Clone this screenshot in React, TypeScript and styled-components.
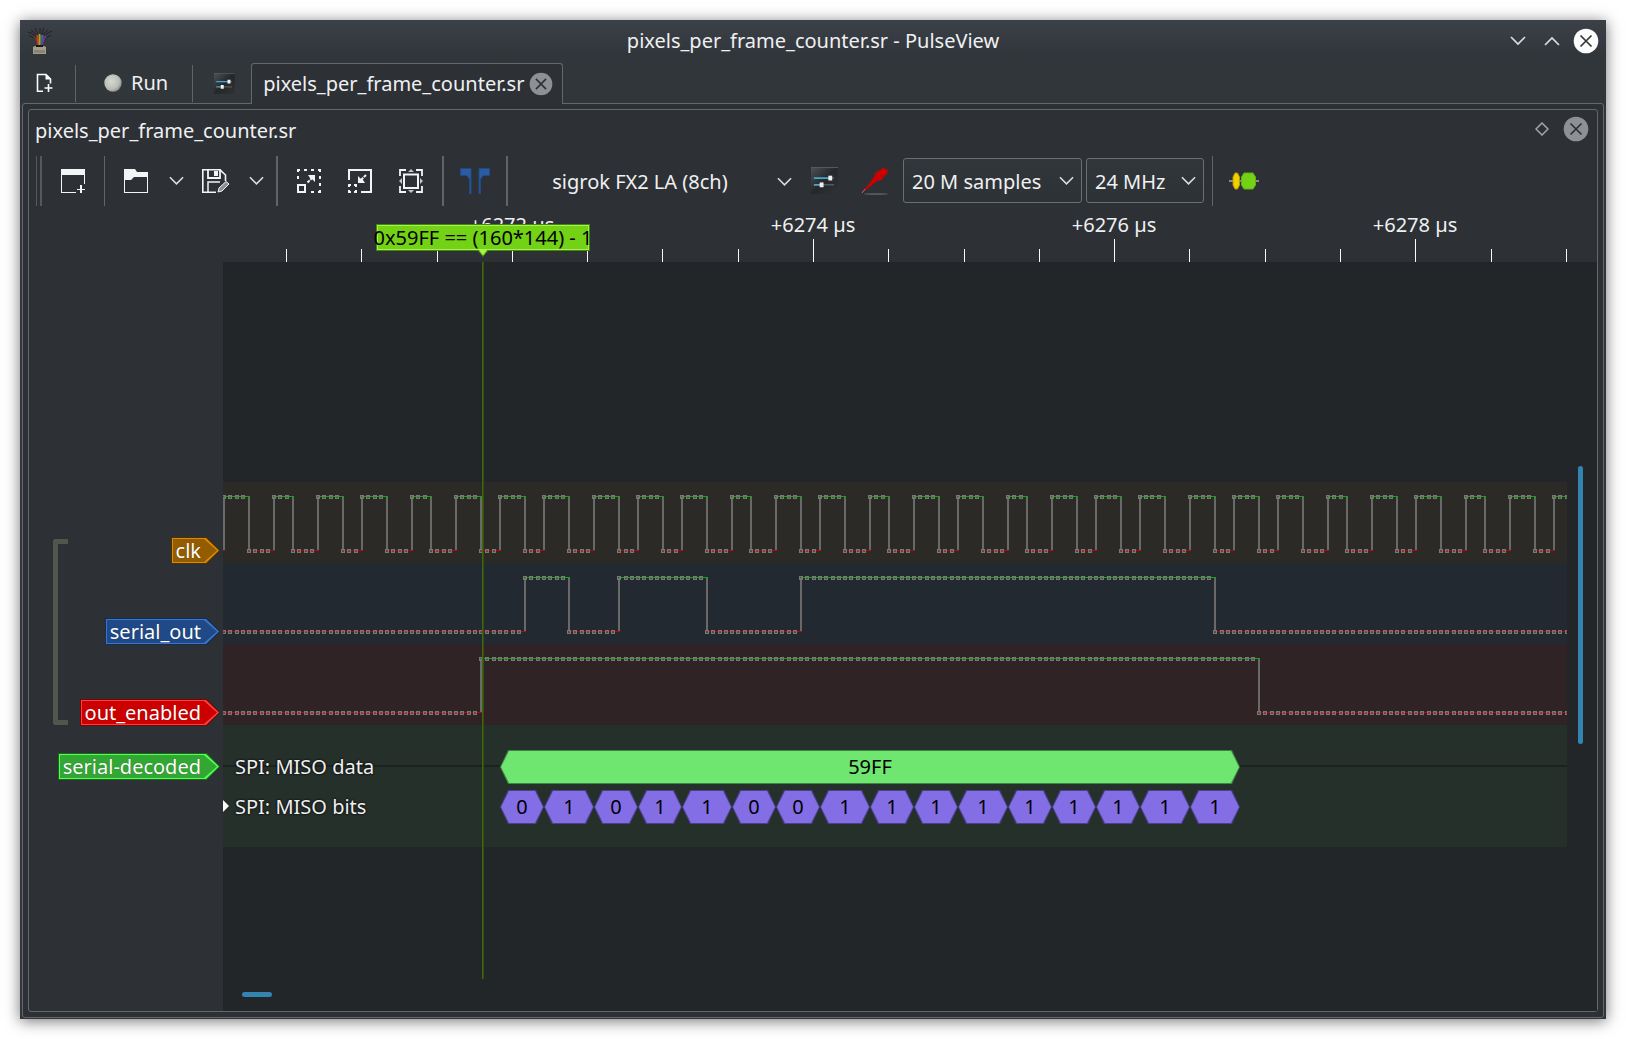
import React, { useLayoutEffect, useRef, useState } from 'react';
import styled, { createGlobalStyle } from 'styled-components';

const GlobalStyle = createGlobalStyle`
  *, *::before, *::after { box-sizing: border-box; }
  body {
    margin: 0;
    background: #fff;
    color: #eff0f1;
    font-family: "Noto Sans", "Open Sans", sans-serif;
    font-size: 20px;
    line-height: 28px;
  }
  button, select { font: inherit; color: inherit; }
`;

/* ---------- time axis ---------- */

const SAMPLE_PITCH = 6.2736;
const SAMPLE_COUNT = 480;
const GUTTER = 194;
const SCROLL_COLUMN = 30;

const sampleX = (sample: number) => Math.round(1 + sample * SAMPLE_PITCH);

/* ---------- window frame ---------- */

const Window = styled.main`
  display: flex;
  flex-direction: column;
  min-height: calc(100vh - 40px);
  margin: 20px;
  background: #31363b;
  box-shadow: 0 2px 14px rgba(0, 0, 0, 0.55);
`;

const TitleBar = styled.header`
  display: grid;
  grid-template-columns: 1fr auto 1fr;
  align-items: center;
  height: 43px;
  padding: 0 7px 2px;
  background: linear-gradient(#3c4149, #31363b 80%);
`;

const WindowTitle = styled.h1`
  margin: 0;
  font-size: 20px;
  font-weight: 400;
`;

const WindowButtons = styled.div`
  display: flex;
  justify-content: flex-end;
  gap: 8px;
`;

const PlainButton = styled.button<{ $width: number; $height?: number }>`
  display: flex;
  align-items: center;
  justify-content: center;
  width: ${p => p.$width}px;
  height: ${p => p.$height ?? p.$width}px;
  padding: 0;
  border: 0;
  background: none;
`;

const TopBar = styled.div`
  display: flex;
  align-items: flex-end;
  gap: 10px;
  height: 40px;
`;

const MainTools = styled.div`
  display: flex;
  align-items: center;
  gap: 14px;
  height: 40px;
  padding-left: 7px;
`;

const Divider = styled.span<{ $height: number; $width?: number }>`
  flex: none;
  width: ${p => p.$width ?? 1}px;
  height: ${p => p.$height}px;
  background: #616468;
`;

const RunButton = styled.button`
  display: flex;
  align-items: center;
  gap: 9px;
  height: 38px;
  padding: 0 10px 0 14px;
  border: 0;
  background: none;
`;

const Tab = styled.div`
  position: relative;
  z-index: 1;
  display: flex;
  align-items: center;
  gap: 5px;
  height: 41px;
  margin-bottom: -1px;
  padding: 0 9px 0 11px;
  border: 1px solid #64676b;
  border-bottom: 0;
  border-radius: 3px 3px 0 0;
  background: #2d3035;
`;

const OuterFrame = styled.div`
  display: flex;
  flex: 1;
  margin: 0 2px 1px;
  padding: 5px;
  border: 1px solid #64676b;
  border-radius: 3px;
  background: #2d3035;
`;

const Dock = styled.section`
  display: flex;
  flex: 1;
  flex-direction: column;
  min-width: 0;
  border: 1px solid #64676b;
  border-radius: 3px;
`;

const DockTitle = styled.div`
  display: flex;
  align-items: center;
  height: 45px;
  padding: 0 8px 4px 6px;
`;

const DockName = styled.h2`
  flex: 1;
  margin: 0;
  font-size: 20px;
  font-weight: 400;
`;

const DockButtons = styled.div`
  display: flex;
  gap: 8px;
  padding-bottom: 4px;
`;

/* ---------- session toolbar ---------- */

const Toolbar = styled.div`
  display: flex;
  align-items: center;
  gap: 8px;
  height: 51px;
  padding-left: 7px;
`;

const ToolGroup = styled.div<{ $gap: number }>`
  display: flex;
  flex: none;
  align-items: center;
  gap: ${p => p.$gap}px;
`;

const Grip = styled.span`
  width: 6px;
  height: 50px;
  border: solid #55585d;
  border-width: 0 2px 0 1px;
`;

const DeviceButton = styled.button`
  display: flex;
  align-items: center;
  gap: 16px;
  width: 277px;
  height: 40px;
  padding: 2px 4px 0 0;
  border: 0;
  background: none;
`;

const DeviceName = styled.span`
  flex: 1;
  text-align: center;
`;

const SelectBox = styled.label<{ $width: number }>`
  display: grid;
  align-items: center;
  width: ${p => p.$width}px;
  height: 45px;

  > * { grid-area: 1 / 1; }
  > svg {
    justify-self: end;
    margin-right: 8px;
    pointer-events: none;
  }
`;

const Select = styled.select`
  width: 100%;
  height: 100%;
  padding: 2px 28px 0 8px;
  border: 1px solid #6b6e72;
  border-radius: 3px;
  background: linear-gradient(#31363a, #2d3236);
  appearance: none;
`;

/* ---------- time ruler ---------- */

const RulerBar = styled.div`
  height: 56px;
  padding: 0 ${SCROLL_COLUMN}px 0 ${GUTTER}px;
`;

const Scale = styled.div`
  position: relative;
  height: 100%;
  overflow: hidden;
`;

const Ticks = styled.svg`
  display: block;
  width: 100%;
  height: 56px;
`;

const TickLabel = styled.span`
  position: absolute;
  top: 5px;
  width: 100px;
  margin-left: -50px;
  text-align: center;
`;

const Flag = styled.div`
  position: absolute;
  top: 18px;
  left: 153px;
  display: flex;
  justify-content: center;
  width: 214px;
  height: 27px;
  border: 1px solid #47850c;
  background: #73d216;
  box-shadow: inset 0 0 0 1px #a0f64c;
  color: #000;
  line-height: 25px;
  white-space: nowrap;
`;

const FlagTip = styled.svg`
  position: absolute;
  top: 24px;
  left: 100px;
`;

/* ---------- signal view ---------- */

const Body = styled.div`
  display: flex;
  flex: 1;
`;

const Gutter = styled.div`
  display: flex;
  flex-direction: column;
  flex: none;
  gap: 27px;
  width: ${GUTTER}px;
  padding: 275px 3px 0 24px;
`;

const SignalGroup = styled.div`
  display: flex;
  align-items: center;
  justify-content: space-between;
`;

const Bracket = styled.span`
  width: 15px;
  height: 186px;
  border: 5px solid #53554f;
  border-right: 0;
  border-radius: 3px 0 0 3px;
  box-shadow: 0 0 1px 1px #2f312f;
`;

const LabelColumn = styled.div`
  display: flex;
  flex-direction: column;
  align-items: flex-end;
  gap: 54px;
`;

const ARROW = 'polygon(0 0, calc(100% - 13px) 0, 100% 50%, calc(100% - 13px) 100%, 0 100%)';

const SignalLabel = styled.div<{ $fill: string; $light: string; $dark: string }>`
  position: relative;
  z-index: 0;
  align-self: flex-end;
  height: 27px;
  padding: 0 19px 0 5px;
  background: ${p => p.$dark};
  clip-path: ${ARROW};
  color: #fff;
  line-height: 27px;
  text-shadow: 0 0 1px rgba(0, 0, 0, 0.4);

  &::before, &::after {
    content: "";
    position: absolute;
    z-index: -1;
    clip-path: ${ARROW};
  }
  &::before { inset: 1px; background: ${p => p.$light}; }
  &::after { inset: 2px 3px 2px 2px; background: ${p => p.$fill}; }
`;

const View = styled.div`
  display: grid;
  flex: 1;
  grid-template: 1fr 32px / minmax(0, 1fr) ${SCROLL_COLUMN}px;
  min-width: 0;
  background: #232629;
`;

const Traces = styled.div`
  position: relative;
  padding-top: 220px;
  overflow: hidden;
`;

const TraceRow = styled.div<{ $tint: string }>`
  height: 81px;
  background: ${p => p.$tint};
`;

const Wave = styled.svg`
  display: block;
  width: 100%;
  height: 81px;
`;

const DecoderRow = styled.div`
  display: flex;
  flex-direction: column;
  gap: 6px;
  height: 122px;
  padding-top: 25px;
  background: #25302b;
`;

const AnnotationRow = styled.div<{ $line?: boolean }>`
  position: relative;
  height: 34px;
  padding-left: 12px;
  background: ${p => (p.$line ? 'linear-gradient(#1c221f, #1c221f) 0 15px / 100% 2px no-repeat' : 'none')};
  line-height: 34px;
`;

const RowTitle = styled.span`
  text-shadow: 0 0 2px #111, 0 0 2px #111, 0 0 1px #111;
`;

const Expander = styled.svg`
  position: absolute;
  top: 10px;
  left: 0;
`;

const HEXAGON = 'polygon(8px 0, calc(100% - 8px) 0, 100% 50%, calc(100% - 8px) 100%, 8px 100%, 0 50%)';

const Hex = styled.span<{ $fill: string; $edge: string }>`
  position: absolute;
  z-index: 0;
  top: 0;
  height: 34px;
  background: ${p => p.$edge};
  clip-path: ${HEXAGON};
  color: #000;
  line-height: 33px;
  text-align: center;

  &::before {
    content: "";
    position: absolute;
    z-index: -1;
    inset: 1px;
    background: ${p => p.$fill};
    clip-path: ${HEXAGON};
  }
`;

const CursorLine = styled.span`
  position: absolute;
  top: 0;
  bottom: 0;
  left: 259px;
  width: 2px;
  background: linear-gradient(90deg, #3c670c 50%, #33500f 50%);
`;

const VerticalThumb = styled.span`
  width: 5px;
  height: 278px;
  margin: 204px 0 0 11px;
  border-radius: 3px;
  background: #3384b1;
`;

const HorizontalThumb = styled.span`
  width: 30px;
  height: 5px;
  margin: 13px 0 0 19px;
  border-radius: 3px;
  background: #3384b1;
`;

/* ---------- icons ---------- */

const Chevron = ({ up = false, width = 16 }: { up?: boolean; width?: number }) => (
  <svg width={width} height="10" viewBox="0 0 16 10" fill="none" stroke="#dcdddf" strokeWidth="1.7">
    <path d={up ? 'M1 9 8 2 15 9' : 'M1 1 8 8 15 1'} />
  </svg>
);

const RoundClose = ({ disc, cross }: { disc: string; cross: string }) => (
  <svg width="26" height="26" viewBox="0 0 26 26">
    <circle cx="13" cy="13" r="12.3" fill={disc} />
    <path d="M7.5 7.5 18.5 18.5M18.5 7.5 7.5 18.5" stroke={cross} strokeWidth="1.7" />
  </svg>
);

const AppIcon = () => (
  <svg width="26" height="28" viewBox="0 0 26 28" fill="none">
    <path d="M10 11C7 7 4 6 1 5M10 10C8 6 6 4 4 3M11 9C10 5 9 3 8 1M13 9V1M15 9C15 5 16 3 17 1M15 10C17 6 19 4 21 3M16 11C18 7 21 6 25 4M9 13C6 10 4 9 2 9M17 13C20 10 22 9 24 8" stroke="#202124" strokeWidth="1" />
    <path d="M11 19C10 14 9 12 7 9" stroke="#6d3428" strokeWidth="1.8" />
    <path d="M11.500 19 10 8" stroke="#b8432c" strokeWidth="1.8" />
    <path d="M12.500 19V7" stroke="#c8941f" strokeWidth="1.8" />
    <path d="M13.500 19 14 8" stroke="#4f8f3d" strokeWidth="1.4" />
    <path d="M14.200 19 16 8" stroke="#3f5fae" strokeWidth="1.8" />
    <path d="M15 19C15.500 14 17 11 19 9" stroke="#6d3a8c" strokeWidth="1.800" />
    <path d="M6 20 8 19H17L19 20V27H6Z" fill="#a39d8b" />
    <path d="M9 18H16V20H9Z" fill="#191815" />
    <path d="M7 23H18V26H7Z" fill="#8a8473" />
  </svg>
);

const NewDocIcon = () => (
  <svg width="17" height="20" viewBox="0 0 17 20" fill="none" stroke="#fcfcfc">
    <path d="M7 18.3H1.500V1.500H10L14.500 6V10.500" strokeWidth="1.6" />
    <path d="M9.500 1V6.500H15Z" fill="#fcfcfc" stroke="none" />
    <path d="M12.500 11V19M8.500 15H16.500" strokeWidth="1.6" />
  </svg>
);

const RunLamp = () => (
  <svg width="18" height="18" viewBox="0 0 18 18">
    <defs>
      <radialGradient id="lamp" cx="0.4" cy="0.4" r="0.65">
        <stop offset="0" stopColor="#d6d8d1" />
        <stop offset="0.7" stopColor="#babdb6" />
        <stop offset="1" stopColor="#83867f" />
      </radialGradient>
    </defs>
    <circle cx="9" cy="9" r="8.7" fill="url(#lamp)" />
  </svg>
);

const SlidersIcon = ({ size }: { size: number }) => (
  <svg width={size} height={size} viewBox="0 0 28 28">
    <defs>
      <linearGradient id="panel" x1="0" y1="0" x2="1" y2="1">
        <stop offset="0" stopColor="#505356" />
        <stop offset="0.5" stopColor="#25282a" />
        <stop offset="1" stopColor="#303336" />
      </linearGradient>
    </defs>
    <rect width="28" height="28" fill="url(#panel)" />
    <path d="M0 .5H28" stroke="#5a5d60" />
    <path d="M3 11.500H19M3 18.500H11" stroke="#4aa3d0" strokeWidth="1.8" />
    <path d="M12 18.500H24M20 11.500H24" stroke="#55585b" strokeWidth="1.5" />
    <rect x="18" y="9" width="4" height="5" fill="#eee" />
    <rect x="9" y="16" width="4" height="5" fill="#eee" />
  </svg>
);

const NewViewIcon = () => (
  <svg width="24" height="24" viewBox="0 0 24 24" fill="#f3f4f5" shapeRendering="crispEdges">
    <path d="M0 0H24V15H23V6H1V23H15V24H0Z" />
    <path d="M19 16H21V20H24V21H21V24H19V21H16V20H19Z" />
  </svg>
);

const FolderIcon = () => (
  <svg width="24" height="24" viewBox="0 0 24 24" fill="#f3f4f5">
    <path d="M0 0H11L13 3H24V24H0ZM1 11V23H23V8H10L7 11Z" fillRule="evenodd" />
  </svg>
);

const SaveIcon = () => (
  <svg width="28" height="24" viewBox="0 0 28 24" fill="none" stroke="#f3f4f5">
    <path d="M14 23.2H.8V.8H18L23.500 6V12" strokeWidth="1.6" />
    <path d="M6 .5V9H18V.5" strokeWidth="1.8" />
    <path d="M12 2V7H16V2Z" fill="#f3f4f5" stroke="none" />
    <path d="M6 23V13H18" strokeWidth="1.5" />
    <path d="M16 23 17 19 24 12.500 27 15 20 22Z" fill="#8d9093" strokeWidth="1" />
  </svg>
);

const ZoomInIcon = () => (
  <svg width="24" height="24" viewBox="0 0 24 24" fill="none" stroke="#f3f4f5">
    <path d="M0 1H3M7 1H10M14 1H17M21 1H24M23 1V3M23 7V10M23 14V17M23 21V24M21 23H24M1 1V3M1 7V10M14 23H17" strokeWidth="2" />
    <path d="M1 16H8V23H1Z" strokeWidth="2" />
    <path d="M10.500 13.500 16 8" strokeWidth="2" strokeDasharray="3 1" />
    <path d="M11 6H18V13L15.500 10.500 13 9Z" fill="#f3f4f5" stroke="none" />
  </svg>
);

const ZoomOutIcon = () => (
  <svg width="24" height="24" viewBox="0 0 24 24" fill="none" stroke="#f3f4f5">
    <path d="M1 11V1H23V23H13" strokeWidth="2" />
    <path d="M0 16H3M6 16H9M8 16V18M8 21V24M0 23H3M6 23H8M1 16V18M1 21V24" strokeWidth="2" />
    <path d="M18 6 12.500 11.500" strokeWidth="2" strokeDasharray="3 1" />
    <path d="M10 7 12.500 9.500 15 11 17 14H10Z" fill="#f3f4f5" stroke="none" />
  </svg>
);

const ZoomFitIcon = () => (
  <svg width="24" height="24" viewBox="0 0 24 24" fill="none" stroke="#f3f4f5">
    <path d="M1 7V1H7M17 1H23V7M23 17V23H17M7 23H1V17" strokeWidth="1.8" />
    <path d="M5 5.500H19V19H5Z" strokeWidth="2" />
    <path d="M9 3 12 0 15 3ZM9 21 12 24 15 21ZM3 9 0 12 3 15ZM21 9 24 12 21 15Z" fill="#c5c7c9" stroke="none" />
  </svg>
);

const CursorsIcon = () => (
  <svg width="30" height="26" viewBox="0 0 30 26" stroke="#204a87" strokeWidth="1">
    <path d="M.5.5H11V26H9.500V11L6.500 7.500H.5Z" fill="#2c5c9f" />
    <path d="M29.500.5H19V26H20.500V11L23.500 7.500H29.500Z" fill="#2c5c9f" />
  </svg>
);

const ProbeIcon = () => (
  <svg width="28" height="28" viewBox="0 0 28 28">
    <ellipse cx="15" cy="27" rx="12" ry="1" fill="#54585b" />
    <path d="M1 26 13 10 15 5 20 3 22 0 24 2 27 3 26 7 23 9 21 13 16 14Z" fill="#cc0000" />
    <path d="M1 26 4 22" stroke="#e05a5a" strokeWidth="1" />
  </svg>
);

const DecoderIcon = () => (
  <svg width="30" height="18" viewBox="0 0 30 18">
    <path d="M0 9H30" stroke="#888a85" strokeWidth="2" />
    <path d="M6 1H8.500L10.500 5V13L8.500 17H6L4 13V5Z" fill="#f0d000" stroke="#b99a00" />
    <path d="M15 1H24L26.500 5V13L24 17H15L12.500 13V5Z" fill="#73d216" stroke="#5fb010" />
  </svg>
);

const DiamondIcon = () => (
  <svg width="14" height="14" viewBox="0 0 14 14" fill="none" stroke="#a3a5a7" strokeWidth="1.5">
    <path d="M7 1 13 7 7 13 1 7Z" />
  </svg>
);

/* ---------- data ---------- */

const clkEdges = [
  0, 4, 8, 11, 15, 19, 22, 26, 30, 33, 37, 41, 44, 48, 51, 55, 59, 63, 66, 70, 73, 77, 81, 84,
  88, 92, 95, 99, 103, 106, 110, 114, 117, 121, 125, 128, 132, 136, 139, 143, 146, 150, 154, 158,
  161, 165, 168, 172, 176, 179, 183, 187, 190, 194, 198, 201, 205, 209, 212,
];
const clkRuns = [4, 4, 3, 4, 4, 3];
for (let i = 0; clkEdges[clkEdges.length - 1] < SAMPLE_COUNT - 4; i++) {
  clkEdges.push(clkEdges[clkEdges.length - 1] + clkRuns[i % clkRuns.length]);
}

const channels = [
  { name: 'clk', tint: '#2c2a27', fill: '#935c00', light: '#d98a08', dark: '#4d3102', edges: clkEdges },
  { name: 'serial_out', tint: '#222931', fill: '#204a87', light: '#3a76cf', dark: '#152c50', edges: [48, 55, 63, 77, 92, 158] },
  { name: 'out_enabled', tint: '#2f2326', fill: '#cc0000', light: '#ff4040', dark: '#700606', edges: [41, 165] },
];

const bitStarts = [44, 51, 59, 66, 73, 81, 88, 95, 103, 110, 117, 125, 132, 139, 146, 154, 162];
const bits = '0101100111111111'.split('');

const ticks = Array.from({ length: 40 }, (_, i) => ({
  x: Math.floor(63.5 + i * 12 * SAMPLE_PITCH),
  major: i % 4 === 3,
  time: 6272 + (i - 3) / 2,
}));

/* ---------- parts ---------- */

const HIGH = 14;
const LOW = 68;

function Waveform({ edges, name }: { edges: number[]; name: string }) {
  let high = '';
  let low = '';
  let steps = '';
  let marks = '';
  let holes = '';
  let level = false;
  let from = 0;
  [...edges, SAMPLE_COUNT].forEach((edge, i) => {
    const x = sampleX(edge);
    const run = `M${from} ${level ? HIGH : LOW}H${x + 1}v1H${from}Z`;
    if (level) high += run;
    else low += run;
    if (i < edges.length) steps += `M${x - 1} ${HIGH + 1}h2V${LOW}h-2Z`;
    from = x;
    level = !level;
  });
  let next = 0;
  level = false;
  for (let s = 0; s < SAMPLE_COUNT; s++) {
    while (next < edges.length && edges[next] <= s) {
      level = !level;
      next++;
    }
    const x = sampleX(s) - 2;
    const y = (level ? HIGH : LOW) - 1;
    marks += `M${x} ${y}h4v4h-4ZM${x + 1} ${y + 1}v2h2v-2Z`;
    holes += `M${x + 1} ${y + 1}h2v2h-2Z`;
  }
  return (
    <Wave role="img" aria-label={name} shapeRendering="crispEdges">
      <path d={low} fill="#c80000" />
      <path d={high} fill="#00b400" />
      <path d={steps} fill="#696968" />
      <path d={marks} fill="#787876" fillRule="evenodd" />
      <path d={holes} fill="#787876" fillOpacity="0.45" />
    </Wave>
  );
}

function Ruler() {
  const scale = useRef<HTMLDivElement>(null);
  const [width, setWidth] = useState(0);

  useLayoutEffect(() => {
    const element = scale.current!;
    const measure = () => setWidth(element.clientWidth);
    measure();
    const observer = new ResizeObserver(measure);
    observer.observe(element);
    return () => observer.disconnect();
  }, []);

  return (
    <RulerBar>
      <Scale ref={scale}>
        <Ticks fill="#fcfcfc" shapeRendering="crispEdges">
          {ticks.filter(t => t.x < width).map(t => (
            <rect key={t.x} x={t.x} y={t.major ? 33 : 43} width="1" height={t.major ? 23 : 13} />
          ))}
        </Ticks>
        {ticks.filter(t => t.major && t.x + 50 < width).map(t => (
          <TickLabel key={t.x} style={{ left: t.x }}>+{t.time} µs</TickLabel>
        ))}
        <Flag>
          0x59FF == (160*144) - 1
          <FlagTip width="12" height="8" viewBox="0 0 12 8">
            <path d="M0 1H12L6 8Z" fill="#47850c" />
            <path d="M1 0H11L6 6.5Z" fill="#a0f64c" />
          </FlagTip>
        </Flag>
      </Scale>
    </RulerBar>
  );
}

function Annotation({ from, to, text, fill, edge }: { from: number; to: number; text: string; fill: string; edge: string }) {
  const left = sampleX(from);
  return (
    <Hex $fill={fill} $edge={edge} style={{ left, width: sampleX(to) - left }}>
      {text}
    </Hex>
  );
}

export default function App() {
  return (
    <>
      <GlobalStyle />
      <Window>
        <TitleBar>
          <AppIcon />
          <WindowTitle>pixels_per_frame_counter.sr - PulseView</WindowTitle>
          <WindowButtons>
            <PlainButton $width={26} aria-label="Minimize"><Chevron /></PlainButton>
            <PlainButton $width={26} aria-label="Maximize"><Chevron up /></PlainButton>
            <PlainButton $width={26} aria-label="Close window"><RoundClose disc="#fcfcfc" cross="#31363b" /></PlainButton>
          </WindowButtons>
        </TitleBar>

        <TopBar>
          <MainTools>
            <PlainButton $width={34} aria-label="New session"><NewDocIcon /></PlainButton>
            <Divider $height={37} />
            <RunButton><RunLamp />Run</RunButton>
            <Divider $height={37} />
            <PlainButton $width={34} aria-label="Settings"><SlidersIcon size={21} /></PlainButton>
          </MainTools>
          <Tab>
            pixels_per_frame_counter.sr
            <PlainButton $width={24} aria-label="Close tab"><RoundClose disc="#8e9194" cross="#2d3035" /></PlainButton>
          </Tab>
        </TopBar>

        <OuterFrame>
          <Dock>
            <DockTitle>
              <DockName>pixels_per_frame_counter.sr</DockName>
              <DockButtons>
                <PlainButton $width={26} aria-label="Float"><DiamondIcon /></PlainButton>
                <PlainButton $width={26} aria-label="Close view"><RoundClose disc="#8e9194" cross="#2d3035" /></PlainButton>
              </DockButtons>
            </DockTitle>

            <Toolbar>
              <ToolGroup $gap={11}>
                <Grip />
                <PlainButton $width={40} aria-label="New view"><NewViewIcon /></PlainButton>
                <Divider $height={50} />
                <PlainButton $width={40} aria-label="Open"><FolderIcon /></PlainButton>
                <PlainButton $width={18} $height={40} aria-label="Open options"><Chevron width={15} /></PlainButton>
                <PlainButton $width={40} aria-label="Save"><SaveIcon /></PlainButton>
                <PlainButton $width={18} $height={40} aria-label="Save options"><Chevron width={15} /></PlainButton>
                <Divider $height={50} $width={2} />
                <PlainButton $width={40} aria-label="Zoom in"><ZoomInIcon /></PlainButton>
                <PlainButton $width={40} aria-label="Zoom out"><ZoomOutIcon /></PlainButton>
                <PlainButton $width={40} aria-label="Zoom to fit"><ZoomFitIcon /></PlainButton>
                <Divider $height={50} $width={2} />
                <PlainButton $width={40} aria-label="Show cursors"><CursorsIcon /></PlainButton>
                <Divider $height={50} $width={2} />
                <DeviceButton>
                  <DeviceName>sigrok FX2 LA (8ch)</DeviceName>
                  <Chevron width={15} />
                </DeviceButton>
              </ToolGroup>
              <ToolGroup $gap={11}>
                <PlainButton $width={40} aria-label="Configure device"><SlidersIcon size={27} /></PlainButton>
                <PlainButton $width={40} aria-label="Configure channels"><ProbeIcon /></PlainButton>
              </ToolGroup>
              <ToolGroup $gap={4}>
                <SelectBox $width={179}>
                  <Select aria-label="Sample count"><option>20 M samples</option></Select>
                  <Chevron width={15} />
                </SelectBox>
                <SelectBox $width={118}>
                  <Select aria-label="Sample rate"><option>24 MHz</option></Select>
                  <Chevron width={15} />
                </SelectBox>
              </ToolGroup>
              <ToolGroup $gap={11}>
                <Divider $height={50} />
                <PlainButton $width={40} aria-label="Add protocol decoder"><DecoderIcon /></PlainButton>
              </ToolGroup>
            </Toolbar>

            <Ruler />

            <Body>
              <Gutter>
                <SignalGroup>
                  <Bracket />
                  <LabelColumn>
                    {channels.map(c => (
                      <SignalLabel key={c.name} $fill={c.fill} $light={c.light} $dark={c.dark}>{c.name}</SignalLabel>
                    ))}
                  </LabelColumn>
                </SignalGroup>
                <SignalLabel $fill="#33a733" $light="#55ff55" $dark="#176a17">serial-decoded</SignalLabel>
              </Gutter>

              <View>
                <Traces>
                  {channels.map(c => (
                    <TraceRow key={c.name} $tint={c.tint}><Waveform edges={c.edges} name={c.name} /></TraceRow>
                  ))}
                  <DecoderRow>
                    <AnnotationRow $line>
                      <RowTitle>SPI: MISO data</RowTitle>
                      <Annotation from={44} to={162} text="59FF" fill="#6fe670" edge="#3f8544" />
                    </AnnotationRow>
                    <AnnotationRow>
                      <Expander width="6" height="12" viewBox="0 0 6 12"><path d="M0 0 6 6 0 12Z" fill="#fcfcfc" /></Expander>
                      <RowTitle>SPI: MISO bits</RowTitle>
                      {bits.map((bit, i) => (
                        <Annotation key={i} from={bitStarts[i]} to={bitStarts[i + 1]} text={bit} fill="#846ee6" edge="#4b4089" />
                      ))}
                    </AnnotationRow>
                  </DecoderRow>
                  <CursorLine />
                </Traces>
                <VerticalThumb />
                <HorizontalThumb />
              </View>
            </Body>
          </Dock>
        </OuterFrame>
      </Window>
    </>
  );
}
